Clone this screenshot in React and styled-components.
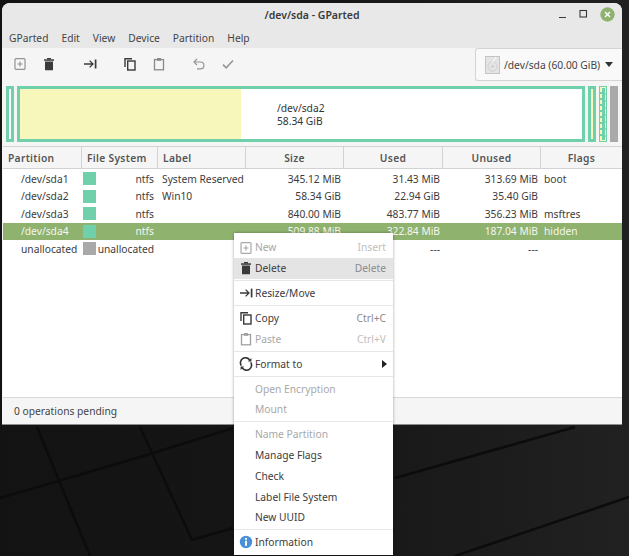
import React from "react";
import styled, { createGlobalStyle } from "styled-components";

const Global = createGlobalStyle`
  html, body {
    margin: 0;
    padding: 0;
    width: 629px;
    height: 556px;
    overflow: hidden;
    background: #161616;
    font-family: "Noto Sans", "Liberation Sans", sans-serif;
    font-size: 10.25px;
    color: #3c3c3c;
  }
`;

const Desktop = styled("div")`
  position: relative;
  width: 629px;
  height: 556px;
  padding: 3px 7px 0 2px;
  box-sizing: border-box;
  background: linear-gradient(90deg, #131313 0%, #161616 50%, #212121 100%);
`;

const Wallpaper = styled("svg")`
  position: absolute;
  left: 0;
  top: 0;
`;

const Window = styled("div")`
  position: relative;
  width: 620px;
  height: 422px;
  display: flex;
  flex-direction: column;
  background: #f5f5f5;
  border-radius: 8px 8px 0 0;
  border-bottom: 1px solid #8c8c8c;
  box-sizing: border-box;
  overflow: hidden;
`;

const TitleBar = styled("div")`
  height: 24px;
  flex: none;
  display: flex;
  align-items: center;
  justify-content: center;
  position: relative;
  background: #e8e8e8;
  font-weight: 600;
  font-size: 10.5px;
  color: #3a3a3a;
`;

const WindowButtons = styled("div")`
  position: absolute;
  right: 7px;
  top: 4px;
  display: flex;
  align-items: center;
  gap: 12px;
`;

const MenuBar = styled("div")`
  height: 21px;
  flex: none;
  display: flex;
  align-items: center;
  gap: 13px;
  padding-left: 7px;
  background: #e8e8e8;
  color: #444;
`;

const Toolbar = styled("div")`
  height: 37px;
  flex: none;
  display: flex;
  align-items: flex-start;
  position: relative;
`;

const ToolButton = styled("div")`
  width: 14px;
  height: 14px;
  margin-left: ${(p) => p.$gap}px;
  margin-top: 9px;
  display: flex;
  opacity: ${(p) => (p.$off ? 0.6 : 1)};
`;

const DeviceCombo = styled("div")`
  margin-left: auto;
  width: 147px;
  height: 33px;
  box-sizing: border-box;
  border: 1px solid #d4d4d4;
  border-right: none;
  border-radius: 3px 0 0 3px;
  background: #f9f9f9;
  display: flex;
  align-items: center;
  padding-left: 9px;
  gap: 4px;
  color: #444;
  white-space: nowrap;
`;

const Caret = styled("span")`
  width: 0;
  height: 0;
  margin-left: 1px;
  border-left: 4px solid transparent;
  border-right: 4px solid transparent;
  border-top: 5px solid #333;
`;

const DiskBar = styled("div")`
  height: 56px;
  flex: none;
  margin-top: 1px;
  padding-left: 4px;
  display: flex;
`;

const PartitionBox = styled("div")`
  width: ${(p) => p.$width}px;
  margin-right: ${(p) => p.$gap}px;
  box-sizing: border-box;
  flex: none;
  border: ${(p) => (p.$thin ? 1 : 3)}px solid #70d0ac;
  padding: 0;
  display: flex;
  background: #fff;
  position: relative;
`;

const Sliver = styled("div")`
  flex: 1;
  margin: 0;
  background: ${(p) => p.$color};
`;

const DashedSliver = styled("div")`
  flex: 1;
  background-color: #70d0ac;
  background-image:
    repeating-linear-gradient(180deg, #f7f7bb 0 4px, #70d0ac 4px 6px),
    repeating-linear-gradient(180deg, #f7f7bb 0 5px, #9adfc2 5px 7px);
  background-size: 2px 100%, 1px 100%;
  background-position: left top, right top;
  background-repeat: no-repeat;
  border-top: 1px solid #f7f7bb;
  border-bottom: 1px solid #f7f7bb;
`;

const UsedArea = styled("div")`
  width: 221px;
  background: #f7f7bb;
  flex: none;
`;

const FreeArea = styled("div")`
  flex: 1;
  padding: 13px 0 0 36px;
  line-height: 13px;
  color: #333;
`;

const Unallocated = styled("div")`
  width: 8px;
  flex: none;
  background: #a9a9a9;
`;

const Grid = styled("div")`
  display: grid;
  grid-template-columns: 79px 76px 88px 98px 99px 98px 1fr;
  align-items: center;
`;

const HeaderRow = styled(Grid)`
  height: 23px;
  margin-top: 4px;
  margin-left: 1px;
  flex: none;
  background: #f5f5f5;
  border-top: 1px solid #d2d2d2;
  border-bottom: 1px solid #d2d2d2;
  box-sizing: border-box;
`;

const HeaderCell = styled("div")`
  height: 100%;
  display: flex;
  align-items: center;
  justify-content: ${(p) => (p.$left ? "flex-start" : "center")};
  padding-left: ${(p) => (p.$left ? "5px" : "0")};
  box-sizing: border-box;
  border-right: 1px solid #d2d2d2;
  font-weight: 600;
  color: #555;
  letter-spacing: 0.3px;
  &:last-child {
    border-right: none;
  }
`;

const Rows = styled("div")`
  height: 229px;
  flex: none;
  margin-left: 1px;
  background: #fff;
  padding-top: 1px;
  box-sizing: border-box;
  border-bottom: 1px solid #d8d8d8;
`;

const Row = styled(Grid)`
  height: 17.5px;
  background: ${(p) => (p.$selected ? "#8fb26f" : "transparent")};
  color: ${(p) => (p.$selected ? "#f4f7f0" : "#3c3c3c")};
  white-space: nowrap;
`;

const Cell = styled("div")`
  text-align: ${(p) => p.$align || "left"};
  padding-left: ${(p) => p.$pl || 0}px;
  padding-right: ${(p) => p.$pr || 0}px;
`;

const FsCell = styled("div")`
  display: flex;
  align-items: center;
  justify-content: space-between;
  padding: 0 4px 0 1px;
`;

const Swatch = styled("span")`
  width: 13px;
  height: 13px;
  background: ${(p) => p.$color};
  flex: none;
`;

const StatusBar = styled("div")`
  flex: 1;
  display: flex;
  align-items: center;
  padding-left: 12px;
  color: #444;
`;

const ContextMenu = styled("div")`
  position: absolute;
  left: 234px;
  top: 233px;
  width: 159px;
  height: 322px;
  box-sizing: border-box;
  padding-top: 4px;
  background: #fff;
  box-shadow: 0 0 3px rgba(0, 0, 0, 0.35);
  display: flex;
  flex-direction: column;
`;

const MenuItem = styled("div")`
  height: 20.75px;
  flex: none;
  display: flex;
  align-items: center;
  padding: 0 7px 0 21px;
  position: relative;
  color: ${(p) => (p.$off ? "#a8a8a8" : "#3c3c3c")};
  background: ${(p) => (p.$hover ? "#e4e4e4" : "transparent")};
`;

const MenuIcon = styled("span")`
  position: absolute;
  left: 5px;
  top: 3.5px;
  width: 14px;
  height: 14px;
  display: flex;
  opacity: ${(p) => (p.$off ? 0.5 : 1)};
`;

const Shortcut = styled("span")`
  margin-left: auto;
  color: ${(p) => (p.$off ? "#c0c0c0" : "#8a8a8a")};
`;

const SubArrow = styled("span")`
  margin-left: auto;
  margin-right: -1px;
  width: 0;
  height: 0;
  border-top: 4.5px solid transparent;
  border-bottom: 4.5px solid transparent;
  border-left: 5px solid #222;
`;

const Separator = styled("div")`
  height: 4.2px;
  flex: none;
  display: flex;
  align-items: center;
  &::after {
    content: "";
    width: 100%;
    height: 1px;
    background: #e6e6e6;
  }
`;

const NewIcon = () => (
  <svg width="14" height="14" viewBox="0 0 14 14" fill="none" stroke="#555" strokeWidth="1.2">
    <rect x="2" y="1.6" width="10" height="10.8" rx="1" />
    <path d="M7 4.5v5M4.5 7h5" />
  </svg>
);

const TrashIcon = () => (
  <svg width="14" height="14" viewBox="0 0 14 14" fill="#3a3a3a">
    <rect x="2" y="2.3" width="10" height="1.5" />
    <rect x="5" y="1" width="4" height="1.5" />
    <path d="M3 4.6h8v8.1a.6.6 0 0 1-.6.6H3.6a.6.6 0 0 1-.6-.6z" />
  </svg>
);

const ResizeIcon = () => (
  <svg width="14" height="14" viewBox="0 0 14 14" fill="none" stroke="#3a3a3a" strokeWidth="1.3">
    <path d="M1 7h8.6M6.6 3.6 10 7l-3.4 3.4" />
    <path d="M12.6 2.6v8.8" strokeWidth="1.7" />
  </svg>
);

const CopyIcon = () => (
  <svg width="14" height="14" viewBox="0 0 14 14" fill="none" stroke="#3a3a3a" strokeWidth="1.4">
    <path d="M2 10V1.7h7" />
    <rect x="4.7" y="4" width="7.3" height="9" />
  </svg>
);

const PasteIcon = () => (
  <svg width="14" height="14" viewBox="0 0 14 14" fill="none" stroke="#444" strokeWidth="1.3">
    <rect x="2.5" y="2.6" width="9" height="10.2" />
    <rect x="5" y="1" width="4" height="2.8" fill="#444" stroke="none" />
  </svg>
);

const UndoIcon = () => (
  <svg width="14" height="14" viewBox="0 0 14 14" fill="none" stroke="#555" strokeWidth="1.2">
    <path d="M5 2 2 5l3 3" />
    <path d="M2.4 5h6.1a3.4 3.4 0 0 1 0 6.8H5" />
  </svg>
);

const CheckIcon = () => (
  <svg width="14" height="14" viewBox="0 0 14 14" fill="none" stroke="#555" strokeWidth="1.5">
    <path d="m2 7.6 3.2 3.2L12 3.6" />
  </svg>
);

const RefreshIcon = () => (
  <svg width="14" height="14" viewBox="0 0 14 14" fill="none" stroke="#333" strokeWidth="1.6">
    <path d="M2.3 8.6A5 5 0 0 1 10.6 3" />
    <path d="M11.7 5.4A5 5 0 0 1 3.4 11" />
    <path d="M12.4 1v3.6H8.8z" fill="#333" stroke="none" />
    <path d="M1.6 13V9.4h3.6z" fill="#333" stroke="none" />
  </svg>
);

const InfoIcon = () => (
  <svg width="14" height="14" viewBox="0 0 14 14">
    <circle cx="7" cy="7" r="6.2" fill="#4a90d9" />
    <rect x="6.1" y="5.8" width="1.9" height="5" fill="#fff" />
    <circle cx="7" cy="3.9" r="1.1" fill="#fff" />
  </svg>
);

const DiskIcon = () => (
  <svg width="15" height="18" viewBox="0 0 15 18">
    <rect x="0.5" y="0.5" width="14" height="17" fill="#e4e4e4" stroke="#c4c4c4" />
    <circle cx="7.5" cy="10.5" r="4.6" fill="none" stroke="#cfcfcf" />
    <circle cx="7.5" cy="10.5" r="1.4" fill="#cfcfcf" />
    <path d="M11 1 7 7" stroke="#fff" />
  </svg>
);

const CloseButton = () => (
  <svg width="15" height="15" viewBox="0 0 15 15">
    <circle cx="7.5" cy="7.5" r="7.2" fill="#8fb26f" />
    <path d="m5 5 5 5M10 5l-5 5" stroke="#fff" strokeWidth="1.3" />
  </svg>
);

const MinButton = () => (
  <svg width="9" height="15" viewBox="0 0 9 15">
    <path d="M1 10.5h7" stroke="#3a3a3a" strokeWidth="1.2" />
  </svg>
);

const MaxButton = () => (
  <svg width="9" height="15" viewBox="0 0 9 15">
    <rect x="1" y="3.5" width="6.5" height="6.5" fill="none" stroke="#3a3a3a" strokeWidth="1.1" />
  </svg>
);

const rows = [
  { name: "/dev/sda1", fs: "ntfs", label: "System Reserved", size: "345.12 MiB", used: "31.43 MiB", unused: "313.69 MiB", flags: "boot" },
  { name: "/dev/sda2", fs: "ntfs", label: "Win10", size: "58.34 GiB", used: "22.94 GiB", unused: "35.40 GiB", flags: "" },
  { name: "/dev/sda3", fs: "ntfs", label: "", size: "840.00 MiB", used: "483.77 MiB", unused: "356.23 MiB", flags: "msftres" },
  { name: "/dev/sda4", fs: "ntfs", label: "", size: "509.88 MiB", used: "322.84 MiB", unused: "187.04 MiB", flags: "hidden", selected: true },
  { name: "unallocated", fs: "unallocated", label: "", size: "1.02 MiB", used: "---", unused: "---", flags: "", gray: true },
];

const tools = [
  { icon: <NewIcon />, gap: 11, off: true },
  { icon: <TrashIcon />, gap: 15 },
  { icon: <ResizeIcon />, gap: 27 },
  { icon: <CopyIcon />, gap: 26 },
  { icon: <PasteIcon />, gap: 15, off: true },
  { icon: <UndoIcon />, gap: 26, off: true },
  { icon: <CheckIcon />, gap: 15, off: true },
];

const menu = [
  { text: "New", icon: <NewIcon />, key_: "Insert", off: true },
  { text: "Delete", icon: <TrashIcon />, key_: "Delete", hover: true },
  "sep",
  { text: "Resize/Move", icon: <ResizeIcon /> },
  "sep",
  { text: "Copy", icon: <CopyIcon />, key_: "Ctrl+C" },
  { text: "Paste", icon: <PasteIcon />, key_: "Ctrl+V", off: true },
  "sep",
  { text: "Format to", icon: <RefreshIcon />, sub: true },
  "sep",
  { text: "Open Encryption", off: true },
  { text: "Mount", off: true },
  "sep",
  { text: "Name Partition", off: true },
  { text: "Manage Flags" },
  { text: "Check" },
  { text: "Label File System" },
  { text: "New UUID" },
  "sep",
  { text: "Information", icon: <InfoIcon /> },
];

const App = () => (
  <>
    <Global />
    <Desktop>
      <Wallpaper width="629" height="556" viewBox="0 0 629 556" fill="none" stroke="#0c0c0c" strokeWidth="2.5">
        <path d="M37 427 90 556" />
        <path d="M0 498 147 455 233 428" />
        <path d="M140 427 192 540 233 528" />
        <path d="M395 478 575 427" />
        <path d="M455 556 629 497" />
      </Wallpaper>
      <Window>
        <TitleBar>
          /dev/sda - GParted
          <WindowButtons>
            <MinButton />
            <MaxButton />
            <CloseButton />
          </WindowButtons>
        </TitleBar>
        <MenuBar>
          {["GParted", "Edit", "View", "Device", "Partition", "Help"].map((m) => (
            <span key={m}>{m}</span>
          ))}
        </MenuBar>
        <Toolbar>
          {tools.map((t, i) => (
            <ToolButton key={i} $gap={t.gap} $off={t.off}>
              {t.icon}
            </ToolButton>
          ))}
          <DeviceCombo>
            <DiskIcon />
            /dev/sda (60.00 GiB)
            <Caret />
          </DeviceCombo>
        </Toolbar>
        <DiskBar>
          <PartitionBox $width={8} $gap={3}>
            <Sliver $color="#fff" />
          </PartitionBox>
          <PartitionBox $width={568} $gap={3}>
            <UsedArea />
            <FreeArea>
              /dev/sda2
              <br />
              58.34 GiB
            </FreeArea>
          </PartitionBox>
          <PartitionBox $width={8} $gap={3}>
            <Sliver $color="#f7f7bb" />
          </PartitionBox>
          <PartitionBox $width={8} $gap={3} $thin>
            <DashedSliver />
          </PartitionBox>
          <Unallocated />
        </DiskBar>
        <HeaderRow>
          <HeaderCell $left>Partition</HeaderCell>
          <HeaderCell $left>File System</HeaderCell>
          <HeaderCell $left>Label</HeaderCell>
          <HeaderCell>Size</HeaderCell>
          <HeaderCell>Used</HeaderCell>
          <HeaderCell>Unused</HeaderCell>
          <HeaderCell>Flags</HeaderCell>
        </HeaderRow>
        <Rows>
          {rows.map((r) => (
            <Row key={r.name} $selected={r.selected}>
              <Cell $pl={18}>{r.name}</Cell>
              <FsCell>
                <Swatch $color={r.gray ? "#a9a9a9" : "#70d0ac"} />
                {r.fs}
              </FsCell>
              <Cell $pl={4}>{r.label}</Cell>
              <Cell $align="right" $pr={3}>{r.size}</Cell>
              <Cell $align="right" $pr={3}>{r.used}</Cell>
              <Cell $align="right" $pr={3}>{r.unused}</Cell>
              <Cell $pl={3}>{r.flags}</Cell>
            </Row>
          ))}
        </Rows>
        <StatusBar>0 operations pending</StatusBar>
      </Window>
      <ContextMenu>
        {menu.map((m, i) =>
          m === "sep" ? (
            <Separator key={i} />
          ) : (
            <MenuItem key={i} $off={m.off} $hover={m.hover}>
              {m.icon && <MenuIcon $off={m.off}>{m.icon}</MenuIcon>}
              {m.text}
              {m.key_ && <Shortcut $off={m.off}>{m.key_}</Shortcut>}
              {m.sub && <SubArrow />}
            </MenuItem>
          )
        )}
      </ContextMenu>
    </Desktop>
  </>
);

export default App;
